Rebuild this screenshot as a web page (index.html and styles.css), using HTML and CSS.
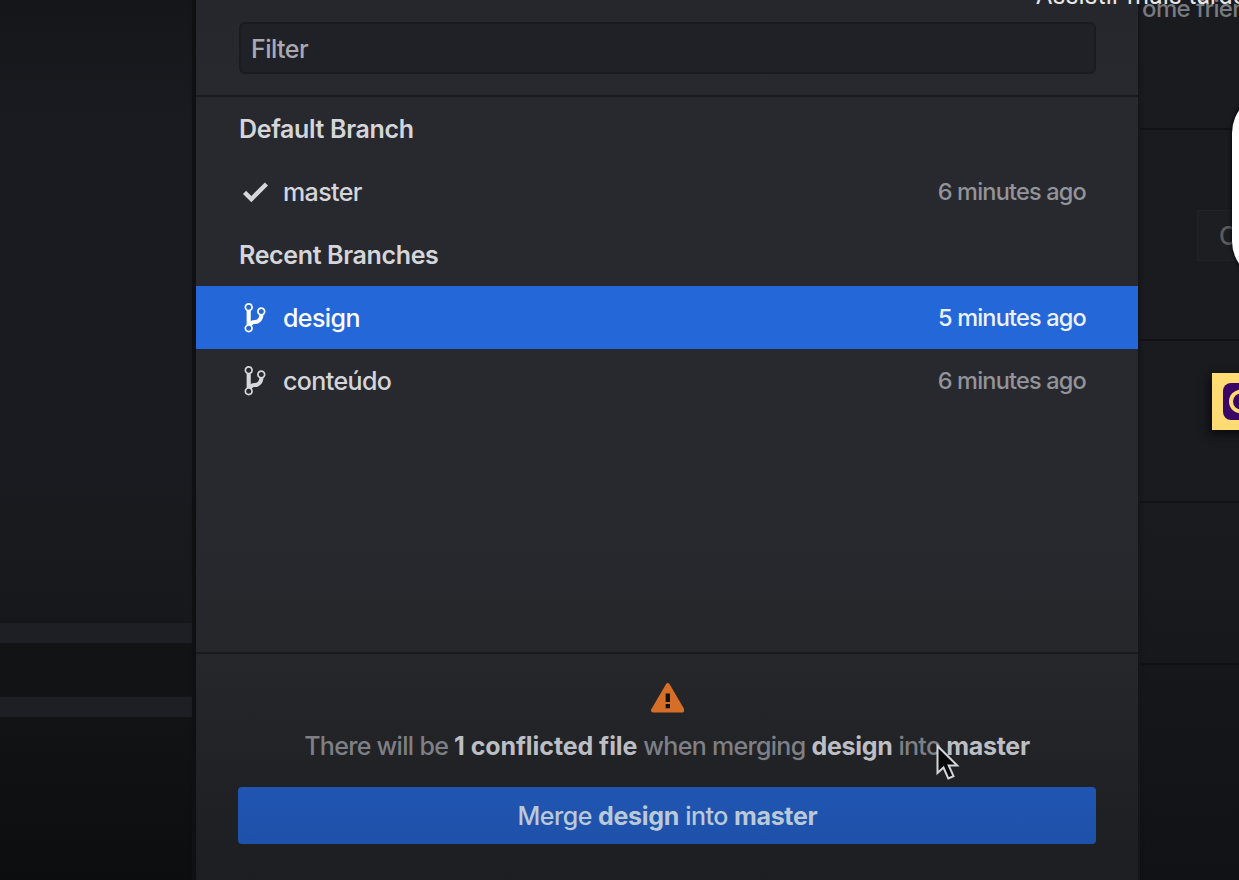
FILE: index.html
```html
<!DOCTYPE html>
<html lang="pt-BR">
<head>
<meta charset="utf-8">
<title>Merge into master</title>
<link rel="stylesheet" href="styles.css">
</head>
<body>
<svg class="sprite" aria-hidden="true">
  <symbol id="branch" viewBox="0 0 10 16"><path fill-rule="evenodd" d="M10 5c0-1.110-.89-2-2-2a1.993 1.993 0 0 0-1 3.720v.3c-.02.52-.23.98-.63 1.380-.4.4-.86.61-1.380.63-.83.02-1.480.16-2 .45V4.720a1.993 1.993 0 0 0-1-3.720C.88 1 0 1.890 0 3a2 2 0 0 0 1 1.720v6.560c-.59.35-1 .99-1 1.720 0 1.110.89 2 2 2 1.110 0 2-.89 2-2 0-.53-.2-1-.53-1.360.09-.06.48-.41.59-.47.25-.11.56-.17.94-.17 1.050-.05 1.950-.45 2.750-1.250S8.950 7.770 9 6.730h-.02C9.590 6.370 10 5.730 10 5zM2 1.800c.66 0 1.200.55 1.200 1.200 0 .65-.55 1.200-1.200 1.200C1.350 4.200.8 3.650.8 3c0-.65.55-1.200 1.200-1.200zm0 12.410c-.66 0-1.200-.55-1.200-1.200 0-.65.55-1.200 1.200-1.200.65 0 1.200.55 1.200 1.200 0 .65-.55 1.200-1.200 1.200zm6-8c-.66 0-1.200-.55-1.200-1.200 0-.65.55-1.200 1.200-1.200.65 0 1.200.55 1.200 1.200 0 .65-.55 1.200-1.200 1.200z"/></symbol>
</svg>
<div class="screen">
  <aside class="left">
    <div class="pane"></div>
    <div class="bar"></div>
    <div class="gap"></div>
    <div class="bar"></div>
    <div class="rest"></div>
  </aside>

  <main class="dialog">
    <div class="filter"><div class="field">Filter</div></div>
    <div class="list">
      <h2 class="heading">Default Branch</h2>
      <div class="row">
        <svg class="icon check" viewBox="0 0 12 16"><path d="M12 5l-8 8-4-4 1.500-1.500L4 10l6.500-6.500z"/></svg>
        <span class="name">master</span><span class="time">6 minutes ago</span>
      </div>
      <h2 class="heading recent">Recent Branches</h2>
      <div class="row selected">
        <svg class="icon branch"><use href="#branch"/></svg>
        <span class="name">design</span><span class="time">5 minutes ago</span>
      </div>
      <div class="row">
        <svg class="icon branch"><use href="#branch"/></svg>
        <span class="name">conteúdo</span><span class="time">6 minutes ago</span>
      </div>
    </div>
    <div class="footer">
      <svg class="alert" viewBox="0 0 16 16"><path fill="#111215" d="M6.500 5.500h3v8h-3z"/><path fill-rule="evenodd" d="M8.893 1.500c-.183-.31-.52-.5-.887-.5s-.703.19-.886.5L.138 13.499a.98.98 0 0 0 0 1.001c.193.31.53.501.886.501h13.964c.367 0 .704-.19.877-.5a1.030 1.030 0 0 0 .01-1.002L8.893 1.500zm.133 11.497H6.987v-2.003h2.039v2.003zm0-3.004H6.987V5.987h2.039v4.006z"/></svg>
      <p class="message">There will be <b class="count">1 conflicted file</b> when merging <b>design</b> into <b>master</b></p>
      <div class="merge"><span class="merge-label">Merge <b>design</b> into <b>master</b></span></div>
    </div>
  </main>

  <aside class="right">
    <div class="cell c1"><span class="friendly">ome friendly</span></div>
    <div class="cell c2"><div class="ghost">C</div></div>
    <div class="cell c3"></div>
    <div class="cell c4"></div>
    <div class="cell c5"></div>
  </aside>

  <div class="later">Assistir mais tarde</div>
  <div class="white-card"></div>
  <div class="badge">
    <svg viewBox="0 0 57 57"><rect x="11" y="10" width="37" height="37" rx="8" fill="#3b0764"/><circle cx="29" cy="28.500" r="10" fill="none" stroke="#ffdc73" stroke-width="4"/></svg>
  </div>
  <svg class="cursor" viewBox="0 0 26 38"><path d="M2.500 3v27l6-5.500 4.800 11 5.200-2.300-4.800-10.700h8.500z"/></svg>
</div>
</body>
</html>
```
FILE: styles.css
```css
* { box-sizing: border-box; }
body { margin: 0; background: #17191d; font-family: Inter, "Liberation Sans", sans-serif; }
.sprite { position: absolute; width: 0; height: 0; }
.screen {
  position: relative; width: 1239px; height: 880px; overflow: hidden;
  display: grid; grid-template-columns: 196px 942px 1fr;
  font-size: 25px; line-height: 32px; font-weight: 450;
}
.left { display: flex; flex-direction: column; background: #101113; padding-right: 4px; }
.pane { height: 622px; background: linear-gradient(#15161a, #191b20 20%, #191b20 75%, #16181b); }
.bar { height: 22px; background: #1d1f24; border: 1px solid #131519; border-width: 1px 0; }
.gap { height: 52px; background: #121315; }
.rest { flex: 1; background: linear-gradient(#111314, #0c0d0f); }

.dialog {
  display: flex; flex-direction: column; color: #d5d6da; z-index: 1;
  background: linear-gradient(#25272c, #28292f 12%, #28292f 55%, #25272b 74%, #1d1e22);
  box-shadow: 0 0 5px #0d0e14;
}
.filter { height: 97px; padding: 22px 42px 0 43px; border-bottom: 2px solid #1a1b20; }
.field {
  height: 52px; padding: 9px 10px; border: 2px solid #1a1b20; border-radius: 6px;
  background: #202127; color: #a9aab1; letter-spacing: -0.55px;
}
.list { height: 557px; border-bottom: 2px solid #191a1e; }
.heading { margin: 0; height: 63px; padding: 16px 43px; font-size: 25px; line-height: 32px; font-weight: 600; letter-spacing: -0.35px; }
.heading.recent { height: 63px; }
.row { height: 63px; display: flex; align-items: center; padding: 0 52px 0 47px; }
.icon { height: 33.6px; fill: currentColor; margin-right: 15px; }
.check { width: 25px; }
.branch { width: 22px; margin: 0 17px 0 1px; }
.name { flex: 1; letter-spacing: -0.6px; }
.time { color: #92949a; font-size: 23.5px; letter-spacing: -0.8px; padding-top: 1px; }
.selected { background: #2467d8; color: #fff; }
.selected .time { color: #edf2ff; }

.footer { display: flex; flex-direction: column; align-items: center; padding-top: 27px; }
.alert { width: 33.6px; height: 33.6px; fill: #d56e27; margin-left: 1px; }
.message { margin: 15.4px 0 25px; color: #7e8086; white-space: nowrap; letter-spacing: -0.7px; }
.message b { font-weight: 700; color: #bdbec3; letter-spacing: -0.3px; }
.message .count { letter-spacing: -0.08px; }
.merge {
  width: 858px; height: 57px; border-radius: 4px; display: flex; align-items: center; justify-content: center;
  background: linear-gradient(#2055b2, #1e51a9); color: #bac9d8; letter-spacing: -0.52px;
}
.merge-label { margin: 1px 0 0 1px; }
.merge b { font-weight: 700; letter-spacing: -0.3px; }

.right { display: flex; flex-direction: column; padding-left: 2px; background: #191b1f; }
.cell { border-bottom: 2px solid #111217; }
.c1 { height: 130px; }
.c2 { height: 211px; padding: 80px 0 0 57px; }
.c3 { height: 162px; }
.c4 { height: 162px; background: linear-gradient(#191b1f, #17181c); }
.c5 { flex: 1; border: 0; background: linear-gradient(#16171b, #111215); }
.friendly { display: block; margin-top: -7px; padding-left: 2px; color: #777a7f; font-size: 24px; letter-spacing: -0.6px; white-space: nowrap; }
.ghost { width: 90px; height: 51px; padding: 9px 21px; border: 1px solid #222328; background: #1c1e22; color: #5b5c60; }

.later { position: absolute; z-index: 2; left: 1036px; top: -19px; font: 25px/30px Roboto, sans-serif; letter-spacing: 0.1px; color: #e6e6e6; white-space: nowrap; }
.white-card { position: absolute; z-index: 2; left: 1232px; top: 93px; width: 200px; height: 188px; border-radius: 40px; background: #fff; box-shadow: 0 0 4px #000; }
.badge { position: absolute; z-index: 2; left: 1212px; top: 373px; width: 57px; height: 57px; background: #ffdc73; box-shadow: -2px 4px 10px #08090b; }
.badge svg { display: block; }
.cursor { position: absolute; z-index: 2; left: 935px; top: 743px; width: 26px; height: 38px; fill: #08090b; stroke: #d4d5d7; stroke-width: 2; }
```
